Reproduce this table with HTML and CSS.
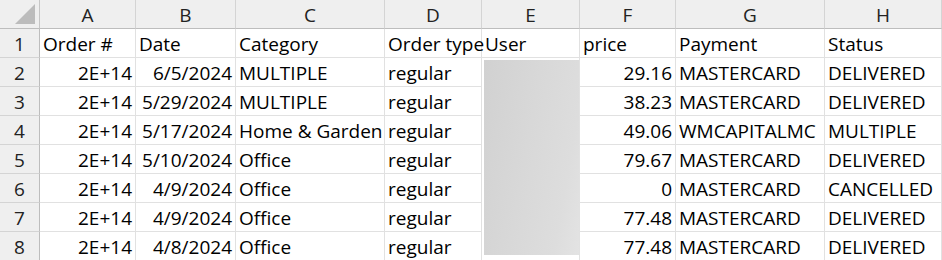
FILE: index.html
```html
<!DOCTYPE html>
<html>
<head>
<meta charset="utf-8">
<link rel="stylesheet" href="styles.css">
</head>
<body>
<div class="sheet">
  <div class="corner"><span class="tri"></span></div>
  <div class="ch">A</div><div class="ch">B</div><div class="ch">C</div><div class="ch">D</div><div class="ch">E</div><div class="ch">F</div><div class="ch">G</div><div class="ch">H</div>

  <div class="rh">1</div>
  <div class="c">Order #</div><div class="c">Date</div><div class="c">Category</div><div class="c">Order type</div><div class="c">User</div><div class="c">price</div><div class="c">Payment</div><div class="c">Status</div>

  <div class="rh">2</div>
  <div class="c r">2E+14</div><div class="c r">6/5/2024</div><div class="c">MULTIPLE</div><div class="c">regular</div>
  <div class="blurcell"><div class="blur"></div></div>
  <div class="c r">29.16</div><div class="c">MASTERCARD</div><div class="c">DELIVERED</div>

  <div class="rh">3</div>
  <div class="c r">2E+14</div><div class="c r">5/29/2024</div><div class="c">MULTIPLE</div><div class="c">regular</div>
  <div class="c r">38.23</div><div class="c">MASTERCARD</div><div class="c">DELIVERED</div>

  <div class="rh">4</div>
  <div class="c r">2E+14</div><div class="c r">5/17/2024</div><div class="c">Home &amp; Garden</div><div class="c">regular</div>
  <div class="c r">49.06</div><div class="c">WMCAPITALMC</div><div class="c">MULTIPLE</div>

  <div class="rh">5</div>
  <div class="c r">2E+14</div><div class="c r">5/10/2024</div><div class="c">Office</div><div class="c">regular</div>
  <div class="c r">79.67</div><div class="c">MASTERCARD</div><div class="c">DELIVERED</div>

  <div class="rh">6</div>
  <div class="c r">2E+14</div><div class="c r">4/9/2024</div><div class="c">Office</div><div class="c">regular</div>
  <div class="c r">0</div><div class="c">MASTERCARD</div><div class="c">CANCELLED</div>

  <div class="rh">7</div>
  <div class="c r">2E+14</div><div class="c r">4/9/2024</div><div class="c">Office</div><div class="c">regular</div>
  <div class="c r">77.48</div><div class="c">MASTERCARD</div><div class="c">DELIVERED</div>

  <div class="rh">8</div>
  <div class="c r">2E+14</div><div class="c r">4/8/2024</div><div class="c">Office</div><div class="c">regular</div>
  <div class="c r">77.48</div><div class="c">MASTERCARD</div><div class="c">DELIVERED</div>
</div>
</body>
</html>
```

FILE: styles.css
```css
html, body {
  margin: 0;
  padding: 0;
  background: #ffffff;
}

.sheet {
  display: grid;
  grid-template-columns: 40px 96px 100px 149px 97px 98px 96px 149px 1fr;
  grid-template-rows: repeat(9, 29px);
  width: 942px;
  height: 260px;
  overflow: hidden;
  font-family: "Open Sans", "Noto Sans", sans-serif;
  font-size: 19px;
  line-height: 24px;
  color: #000;
}

.corner {
  background: #efefef;
  border-right: 1px solid #c6c6c6;
  border-bottom: 1px solid #bdbdbd;
  box-sizing: border-box;
  position: relative;
}

.tri {
  position: absolute;
  right: 4px;
  bottom: 4px;
  width: 0;
  height: 0;
  border-left: 20px solid transparent;
  border-bottom: 20px solid #bcbcbc;
}

.ch {
  background: #efefef;
  border-right: 1px solid #d4d4d4;
  border-bottom: 1px solid #bdbdbd;
  box-sizing: border-box;
  display: flex;
  align-items: center;
  justify-content: center;
  color: #222;
  padding-top: 1px;
}

.rh {
  background: #efefef;
  border-right: 1px solid #bdbdbd;
  border-bottom: 1px solid #d4d4d4;
  box-sizing: border-box;
  display: flex;
  align-items: center;
  justify-content: center;
  color: #222;
  padding-top: 1px;
}

.c {
  border-right: 1px solid #e1e1e1;
  border-bottom: 1px solid #e1e1e1;
  box-sizing: border-box;
  display: flex;
  align-items: center;
  padding: 1px 3px 0 3px;
  white-space: nowrap;
  min-width: 0;
}

.r {
  justify-content: flex-end;
}

.blurcell {
  grid-row: span 7;
  border-right: 1px solid #e1e1e1;
  box-sizing: border-box;
  padding: 2px 0 6px 2px;
  display: flex;
}

.blur {
  flex: 1;
  background: linear-gradient(100deg, #d1d1d1 0%, #d8d8d8 45%, #dddddd 80%, #e3e3e3 100%);
}
```
